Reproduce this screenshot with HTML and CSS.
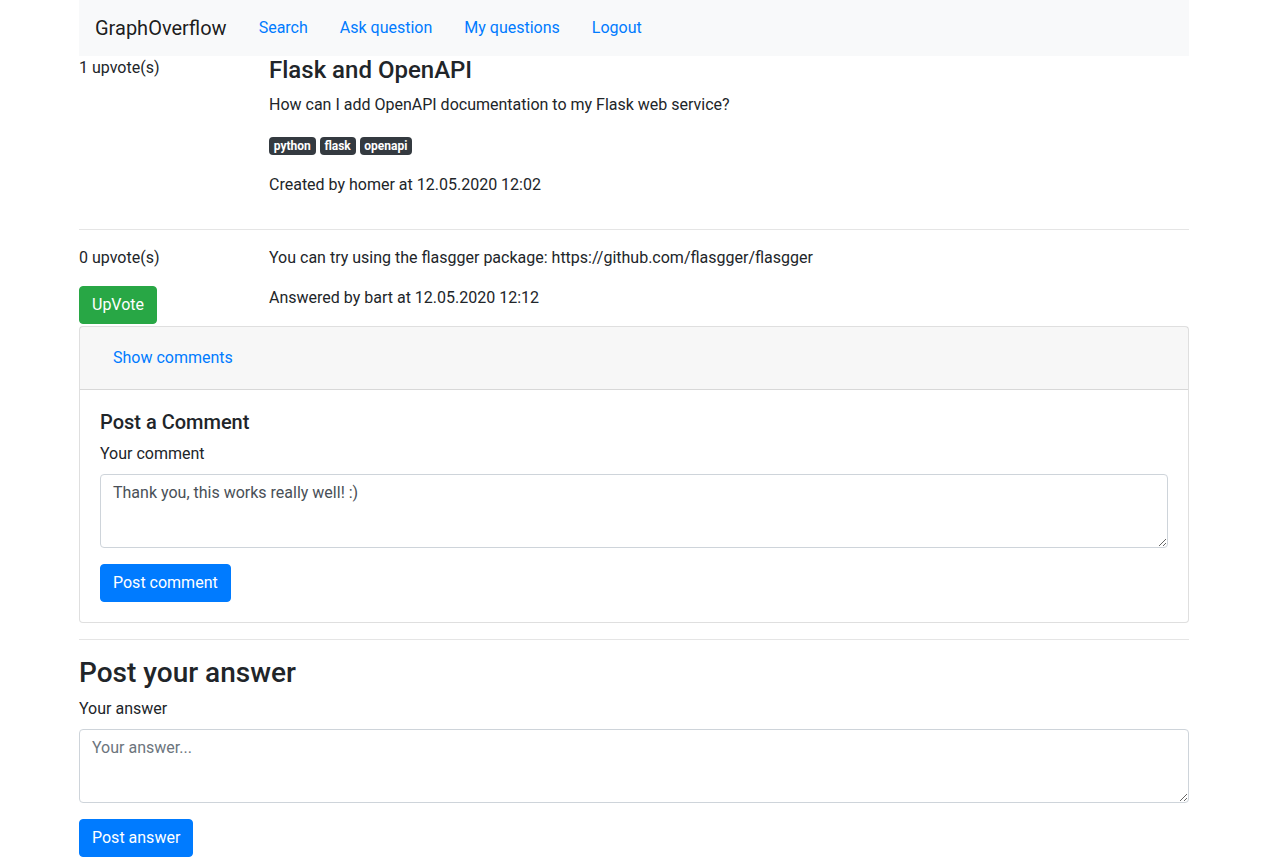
FILE: index.html
```html
<!DOCTYPE html>
<html lang="en">
<head>
<meta charset="utf-8">
<title>GraphOverflow</title>
<link rel="stylesheet" href="styles.css">
</head>
<body>
<div class="container">
  <nav class="navbar">
    <a class="brand" href="#">GraphOverflow</a>
    <a class="nav-link" href="#">Search</a>
    <a class="nav-link" href="#">Ask question</a>
    <a class="nav-link" href="#">My questions</a>
    <a class="nav-link" href="#">Logout</a>
  </nav>

  <div class="row">
    <div class="col-side">
      <p>1 upvote(s)</p>
    </div>
    <div class="col-main">
      <h4 class="title">Flask and OpenAPI</h4>
      <p>How can I add OpenAPI documentation to my Flask web service?</p>
      <p><span class="badge">python</span> <span class="badge">flask</span> <span class="badge">openapi</span></p>
      <p>Created by homer at 12.05.2020 12:02</p>
    </div>
  </div>

  <hr class="divider">

  <div class="row">
    <div class="col-side">
      <p>0 upvote(s)</p>
      <button class="btn btn-success" type="button">UpVote</button>
    </div>
    <div class="col-main">
      <p>You can try using the flasgger package: https://github.com/flasgger/flasgger</p>
      <p>Answered by bart at 12.05.2020 12:12</p>
    </div>
  </div>

  <div class="card">
    <div class="card-header">
      <button class="btn btn-link" type="button">Show comments</button>
    </div>
    <div class="card-body">
      <h5 class="card-title">Post a Comment</h5>
      <div class="form-group">
        <label class="label" for="comment">Your comment</label>
        <textarea id="comment" class="form-control" rows="2">Thank you, this works really well! :)</textarea>
      </div>
      <button class="btn btn-primary" type="button">Post comment</button>
    </div>
  </div>

  <hr class="divider">

  <h3 class="section-title">Post your answer</h3>
  <div class="form-group">
    <label class="label" for="answer">Your answer</label>
    <textarea id="answer" class="form-control" rows="2" placeholder="Your answer..."></textarea>
  </div>
  <button class="btn btn-primary" type="button">Post answer</button>
</div>
</body>
</html>
```

FILE: styles.css
```css
* {
  box-sizing: border-box;
}

html, body {
  margin: 0;
  padding: 0;
}

body {
  font-family: Roboto, "Liberation Sans", sans-serif;
  font-size: 16px;
  line-height: 1.5;
  color: #212529;
  background: #fff;
}

.container {
  width: 1140px;
  margin: 0 auto;
  padding: 0 15px;
}

a {
  color: #007bff;
  text-decoration: none;
}

p {
  margin: 0 0 16px 0;
}

.navbar {
  display: flex;
  align-items: center;
  background: #f8f9fa;
  padding: 8px 16px;
  height: 56px;
}

.brand {
  font-size: 20px;
  line-height: 30px;
  color: rgba(0, 0, 0, 0.9);
  margin-right: 16px;
}

.nav-link {
  padding: 8px 16px;
  line-height: 24px;
  color: #007bff;
}

.row {
  display: flex;
  margin: 0 -15px;
}

.col-side {
  flex: 0 0 190px;
  padding: 0 15px;
}

.col-main {
  flex: 1 1 auto;
  padding: 0 15px;
}

.title {
  font-size: 24px;
  font-weight: 500;
  line-height: 1.2;
  margin: 0 0 8px 0;
}

.badge {
  display: inline-block;
  background: #343a40;
  color: #fff;
  font-size: 12px;
  font-weight: 700;
  line-height: 1;
  padding: 3px 4.8px;
  border-radius: 4px;
  vertical-align: baseline;
}

.divider {
  border: 0;
  border-top: 1px solid rgba(0, 0, 0, 0.1);
  margin: 16px 0;
  height: 0;
}

.btn {
  display: inline-block;
  font-family: inherit;
  font-size: 16px;
  line-height: 24px;
  padding: 6px 12px;
  border: 1px solid transparent;
  border-radius: 4px;
  cursor: pointer;
  font-weight: 400;
}

.btn-success {
  background: #28a745;
  border-color: #28a745;
  color: #fff;
}

.btn-primary {
  background: #007bff;
  border-color: #007bff;
  color: #fff;
}

.btn-link {
  background: transparent;
  color: #007bff;
}

.card {
  border: 1px solid rgba(0, 0, 0, 0.125);
  border-radius: 4px;
  background: #fff;
}

.card-header {
  background: rgba(0, 0, 0, 0.03);
  border-bottom: 1px solid rgba(0, 0, 0, 0.125);
  padding: 12px 20px;
  display: flex;
}

.card-body {
  padding: 20px;
}

.card-title {
  font-size: 20px;
  font-weight: 500;
  line-height: 1.2;
  margin: 0 0 8px 0;
}

.section-title {
  font-size: 28px;
  font-weight: 500;
  line-height: 1.2;
  margin: 0 0 8px 0;
}

.form-group {
  margin-bottom: 16px;
}

.label {
  display: block;
  margin-bottom: 8px;
}

.form-control {
  display: block;
  width: 100%;
  height: 74px;
  font-family: inherit;
  font-size: 16px;
  line-height: 24px;
  color: #495057;
  padding: 6px 12px;
  border: 1px solid #ced4da;
  border-radius: 4px;
  background: #fff;
  resize: vertical;
}

.form-control::placeholder {
  color: #6c757d;
  opacity: 1;
}
```
